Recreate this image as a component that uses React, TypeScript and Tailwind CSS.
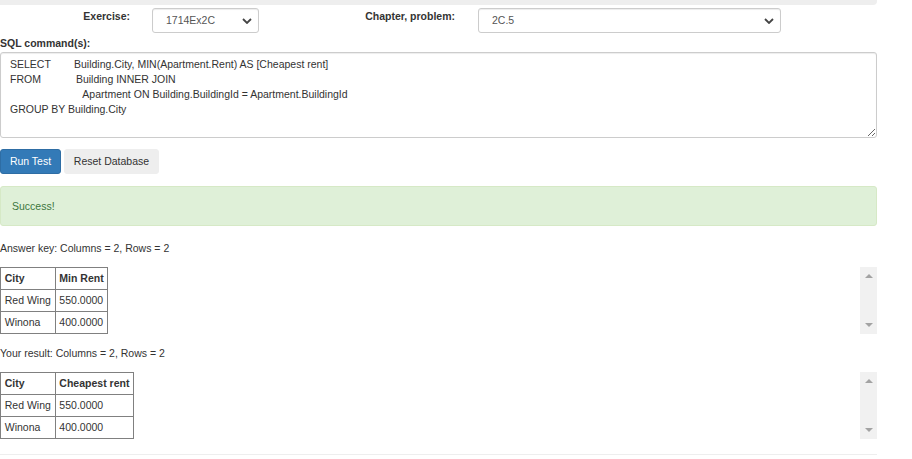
import { ChangeEvent, useState } from "react";

const answerKey = {
  columns: ["City", "Min Rent"],
  rows: [
    ["Red Wing", "550.0000"],
    ["Winona", "400.0000"],
  ],
};

const yourResult = {
  columns: ["City", "Cheapest rent"],
  rows: [
    ["Red Wing", "550.0000"],
    ["Winona", "400.0000"],
  ],
};

const sp = (n: number) => " ".repeat(n);

const initialSql = [
  "SELECT" + sp(8) + "Building.City, MIN(Apartment.Rent) AS [Cheapest rent]",
  "FROM" + sp(12) + "Building INNER JOIN",
  sp(25) + "Apartment ON Building.BuildingId = Apartment.BuildingId",
  "GROUP BY Building.City",
].join("\n");

function Chevron() {
  return (
    <svg width="10" height="6" viewBox="0 0 10 6" className="shrink-0">
      <polyline points="1,1 5,5 9,1" fill="none" stroke="#444" strokeWidth="1.8" />
    </svg>
  );
}

function FakeSelect({ value, className = "" }: { value: string; className?: string }) {
  return (
    <div
      className={`flex h-[25px] items-center justify-between rounded-[3px] border border-[#ccc] bg-white pl-[13px] pr-[6px] text-[#555] shadow-[inset_0_1px_1px_rgba(0,0,0,0.075)] ${className}`}
    >
      <span>{value}</span>
      <Chevron />
    </div>
  );
}

function Scrollbar() {
  return (
    <div className="flex w-[17px] flex-col items-center justify-between bg-[#f1f1f1] py-[7px]">
      <svg width="8" height="4" viewBox="0 0 8 4">
        <polygon points="0,4 4,0 8,4" fill="#a3a3a3" />
      </svg>
      <svg width="8" height="4" viewBox="0 0 8 4">
        <polygon points="0,0 8,0 4,4" fill="#a3a3a3" />
      </svg>
    </div>
  );
}

function ResultTable({ data }: { data: { columns: string[]; rows: string[][] } }) {
  return (
    <div className="flex">
      <div className="flex-1">
        <table className="border-collapse border border-[#808080]">
          <thead>
            <tr>
              {data.columns.map((c) => (
                <th key={c} className="h-[22px] border border-[#808080] px-[3.75px] py-0 text-left font-bold">
                  {c}
                </th>
              ))}
            </tr>
          </thead>
          <tbody>
            {data.rows.map((r, i) => (
              <tr key={i}>
                {r.map((cell, j) => (
                  <td key={j} className="h-[22px] border border-[#808080] px-[3.75px] py-0">
                    {cell}
                  </td>
                ))}
              </tr>
            ))}
          </tbody>
        </table>
      </div>
      <Scrollbar />
    </div>
  );
}

export default function App() {
  const [sql, setSql] = useState(initialSql);

  return (
    <div className="h-[459px] w-[912px] overflow-hidden bg-white font-['Liberation_Sans',Arial,sans-serif] text-[10.5px] leading-[15px] text-[#333]">
      <div className="w-[877px]">
        {/* top bar */}
        <div className="h-[5px] rounded-br-[4px] bg-[#eee]" />

        {/* exercise / chapter pickers */}
        <div className="mt-[3px] flex items-start">
          <div className="w-[130px] pt-px text-right font-bold">Exercise:</div>
          <FakeSelect value="1714Ex2C" className="ml-[22px] w-[107px]" />
          <div className="w-[196px] pt-px text-right font-bold">Chapter, problem:</div>
          <FakeSelect value="2C.5" className="ml-[23px] w-[303px]" />
        </div>

        {/* SQL editor */}
        <div className="mt-[3px] font-bold">SQL command(s):</div>
        <textarea
          value={sql}
          onChange={(e: ChangeEvent<HTMLTextAreaElement>) => setSql(e.target.value)}
          spellCheck={false}
          className="mt-px block h-[86px] w-full rounded-[3px] border border-[#ccc] px-[9px] py-[4px] leading-[15px] whitespace-pre text-[#333] shadow-[inset_0_1px_1px_rgba(0,0,0,0.075)] outline-none"
        />

        {/* buttons */}
        <div className="mt-[11px] flex gap-[3px]">
          <button className="h-[25px] w-[61px] rounded-[3px] border border-[#2e6da4] bg-[#337ab7] text-white">
            Run Test
          </button>
          <button className="h-[25px] w-[95px] rounded-[3px] border border-[#eee] bg-[#eee] text-[#333]">
            Reset Database
          </button>
        </div>

        {/* result alert */}
        <div className="mt-[12px] flex h-[40px] items-center rounded-[3px] border border-[#d6e9c6] bg-[#dff0d8] px-[11px] text-[#3c763d]">
          Success!
        </div>

        <div className="mt-[15px]">Answer key: Columns = 2, Rows = 2</div>
        <div className="mt-[11px]">
          <ResultTable data={answerKey} />
        </div>

        <div className="mt-[12px]">Your result: Columns = 2, Rows = 2</div>
        <div className="mt-[11px]">
          <ResultTable data={yourResult} />
        </div>

        <div className="mt-[15px] border-t border-[#eee]" />
      </div>
    </div>
  );
}
